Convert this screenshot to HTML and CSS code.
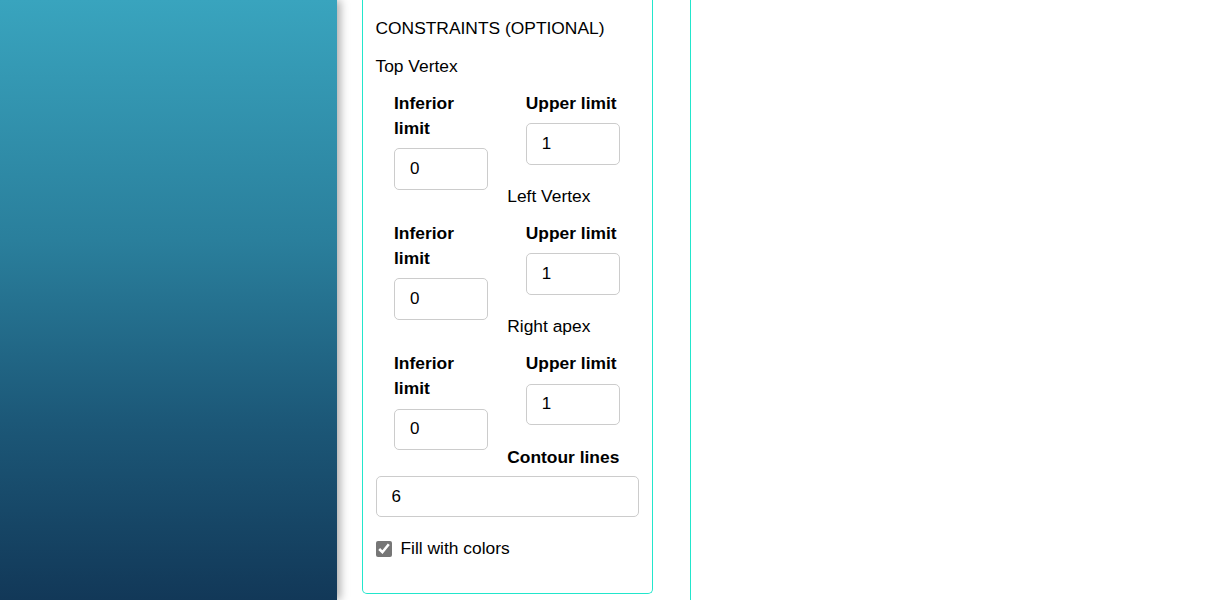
FILE: index.html
```html
<!DOCTYPE html>
<html lang="en">
<head>
<meta charset="utf-8">
<title>Constraints</title>
<link rel="stylesheet" href="styles.css">
</head>
<body>
<div class="layout">
  <aside class="sidebar"></aside>
  <main class="content">
    <section class="panel">
      <h2 class="panel-title">CONSTRAINTS (OPTIONAL)</h2>

      <div class="vertex-name">Top Vertex</div>
      <div class="limits">
        <div class="limit">
          <label class="field-label">Inferior limit</label>
          <input class="field" type="text" value="0">
        </div>
        <div class="limit">
          <label class="field-label">Upper limit</label>
          <input class="field" type="text" value="1">
        </div>
      </div>

      <div class="vertex-name">Left Vertex</div>
      <div class="limits">
        <div class="limit">
          <label class="field-label">Inferior limit</label>
          <input class="field" type="text" value="0">
        </div>
        <div class="limit">
          <label class="field-label">Upper limit</label>
          <input class="field" type="text" value="1">
        </div>
      </div>

      <div class="vertex-name">Right apex</div>
      <div class="limits">
        <div class="limit">
          <label class="field-label">Inferior limit</label>
          <input class="field" type="text" value="0">
        </div>
        <div class="limit">
          <label class="field-label">Upper limit</label>
          <input class="field" type="text" value="1">
        </div>
      </div>

      <label class="field-label field-label-tight">Contour lines</label>
      <input class="field field-wide" type="text" value="6">

      <label class="check-row">
        <input class="check" type="checkbox" checked>
        <span>Fill with colors</span>
      </label>
    </section>
  </main>
</div>
</body>
</html>
```

FILE: styles.css
```css
* {
  box-sizing: border-box;
}

html, body {
  margin: 0;
  padding: 0;
  height: 100%;
  background: #ffffff;
}

body {
  font-family: "Liberation Sans", Arial, sans-serif;
  font-size: 17.4px;
  line-height: 25px;
  color: #000000;
  overflow: hidden;
}

.layout {
  display: flex;
  align-items: stretch;
  height: 600px;
}

.sidebar {
  flex: 0 0 337px;
  height: 600px;
  background: linear-gradient(to bottom, #39a4be 0%, #2a7f9c 40%, #1c5878 70%, #123858 100%);
  box-shadow: 3px 0 9px rgba(0, 0, 0, 0.35);
  position: relative;
  z-index: 2;
}

.content {
  flex: 0 0 354px;
  padding-left: 25px;
  border-right: 1px solid #22e6cc;
  height: 600px;
}

.panel {
  width: 291px;
  padding: 16px 13px 0 12.5px;
  border: 1px solid #22e6cc;
  border-top: 0;
  border-radius: 0 0 5px 5px;
}

.panel-title {
  margin: 0 0 13px 0;
  font-size: 17.4px;
  font-weight: normal;
  line-height: 25px;
}

.vertex-name {
  margin-bottom: 11.7px;
}

.limit {
  float: left;
  width: 50%;
  padding: 0 19px 0 18.5px;
}

.field-label {
  display: block;
  font-weight: bold;
  margin-bottom: 7.6px;
}

.field-label-tight {
  margin-bottom: 6.3px;
}

.field {
  display: block;
  width: 100%;
  height: 41.6px;
  margin: 0 0 19.3px 0;
  padding: 0 15px;
  border: 1px solid #cccccc;
  border-radius: 5px;
  font-family: "Liberation Sans", Arial, sans-serif;
  font-size: 17px;
  color: #000000;
  background: #ffffff;
}

.field-wide {
  margin-bottom: 18.8px;
}

.check-row {
  display: flex;
  align-items: center;
  gap: 9px;
  margin-bottom: 32px;
}

.check {
  margin: 0;
  width: 16px;
  height: 16px;
  accent-color: #767676;
}
```
